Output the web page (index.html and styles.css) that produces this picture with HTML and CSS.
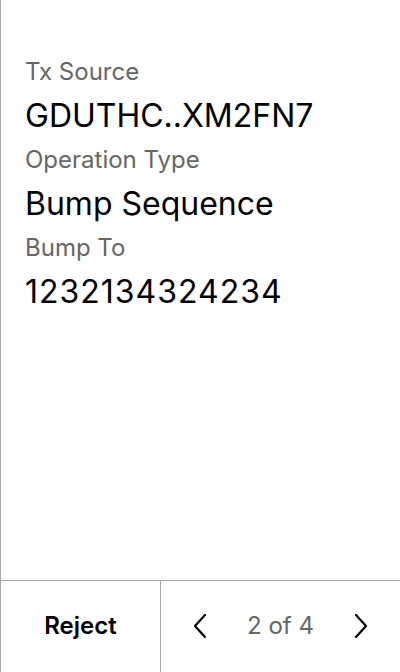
FILE: index.html
```html
<!DOCTYPE html>
<html>
<head>
<meta charset="utf-8">
<link rel="stylesheet" href="styles.css">
</head>
<body>
<div class="screen">
  <main class="content">
    <div class="field">
      <div class="label">Tx Source</div>
      <div class="value">GDUTHC..XM2FN7</div>
    </div>
    <div class="field">
      <div class="label">Operation Type</div>
      <div class="value">Bump Sequence</div>
    </div>
    <div class="field">
      <div class="label">Bump To</div>
      <div class="value digits">1232134324234</div>
    </div>
  </main>
  <footer class="footer">
    <button class="reject">Reject</button>
    <div class="pager">
      <svg class="chev" width="18" height="28" viewBox="0 0 18 28"><path d="M14 3 L4 14 L14 25" fill="none" stroke="#000" stroke-width="2.2" stroke-linecap="round" stroke-linejoin="round"/></svg>
      <span class="count">2 of 4</span>
      <svg class="chev" width="18" height="28" viewBox="0 0 18 28"><path d="M4 3 L14 14 L4 25" fill="none" stroke="#000" stroke-width="2.2" stroke-linecap="round" stroke-linejoin="round"/></svg>
    </div>
  </footer>
</div>
</body>
</html>
```
FILE: styles.css
```css
html, body {
  margin: 0;
  padding: 0;
  background: #fff;
}
.screen {
  width: 400px;
  height: 672px;
  box-sizing: border-box;
  border-left: 1px solid #a8a8a8;
  display: flex;
  flex-direction: column;
  font-family: Inter, "Noto Sans", sans-serif;
}
.content {
  flex: 1;
  padding: 56px 0 0 24px;
}
.field {
  display: flex;
  flex-direction: column;
  margin-bottom: 1px;
}
.label {
  font-size: 24px;
  line-height: 32px;
  color: #666;
}
.value {
  font-size: 32px;
  line-height: 55px;
  color: #000;
}
.digits {
  letter-spacing: 1px;
}
.footer {
  height: 92px;
  border-top: 1px solid #a8a8a8;
  display: flex;
  box-sizing: border-box;
}
.reject {
  width: 160px;
  border: none;
  border-right: 1px solid #a8a8a8;
  background: none;
  font-family: inherit;
  font-size: 24px;
  font-weight: 600;
  color: #000;
  padding: 0 0 2px 0;
}
.pager {
  flex: 1;
  display: flex;
  align-items: center;
  justify-content: space-between;
  padding: 0 30px 2px 30px;
}
.count {
  font-size: 24px;
  color: #666;
}
```
